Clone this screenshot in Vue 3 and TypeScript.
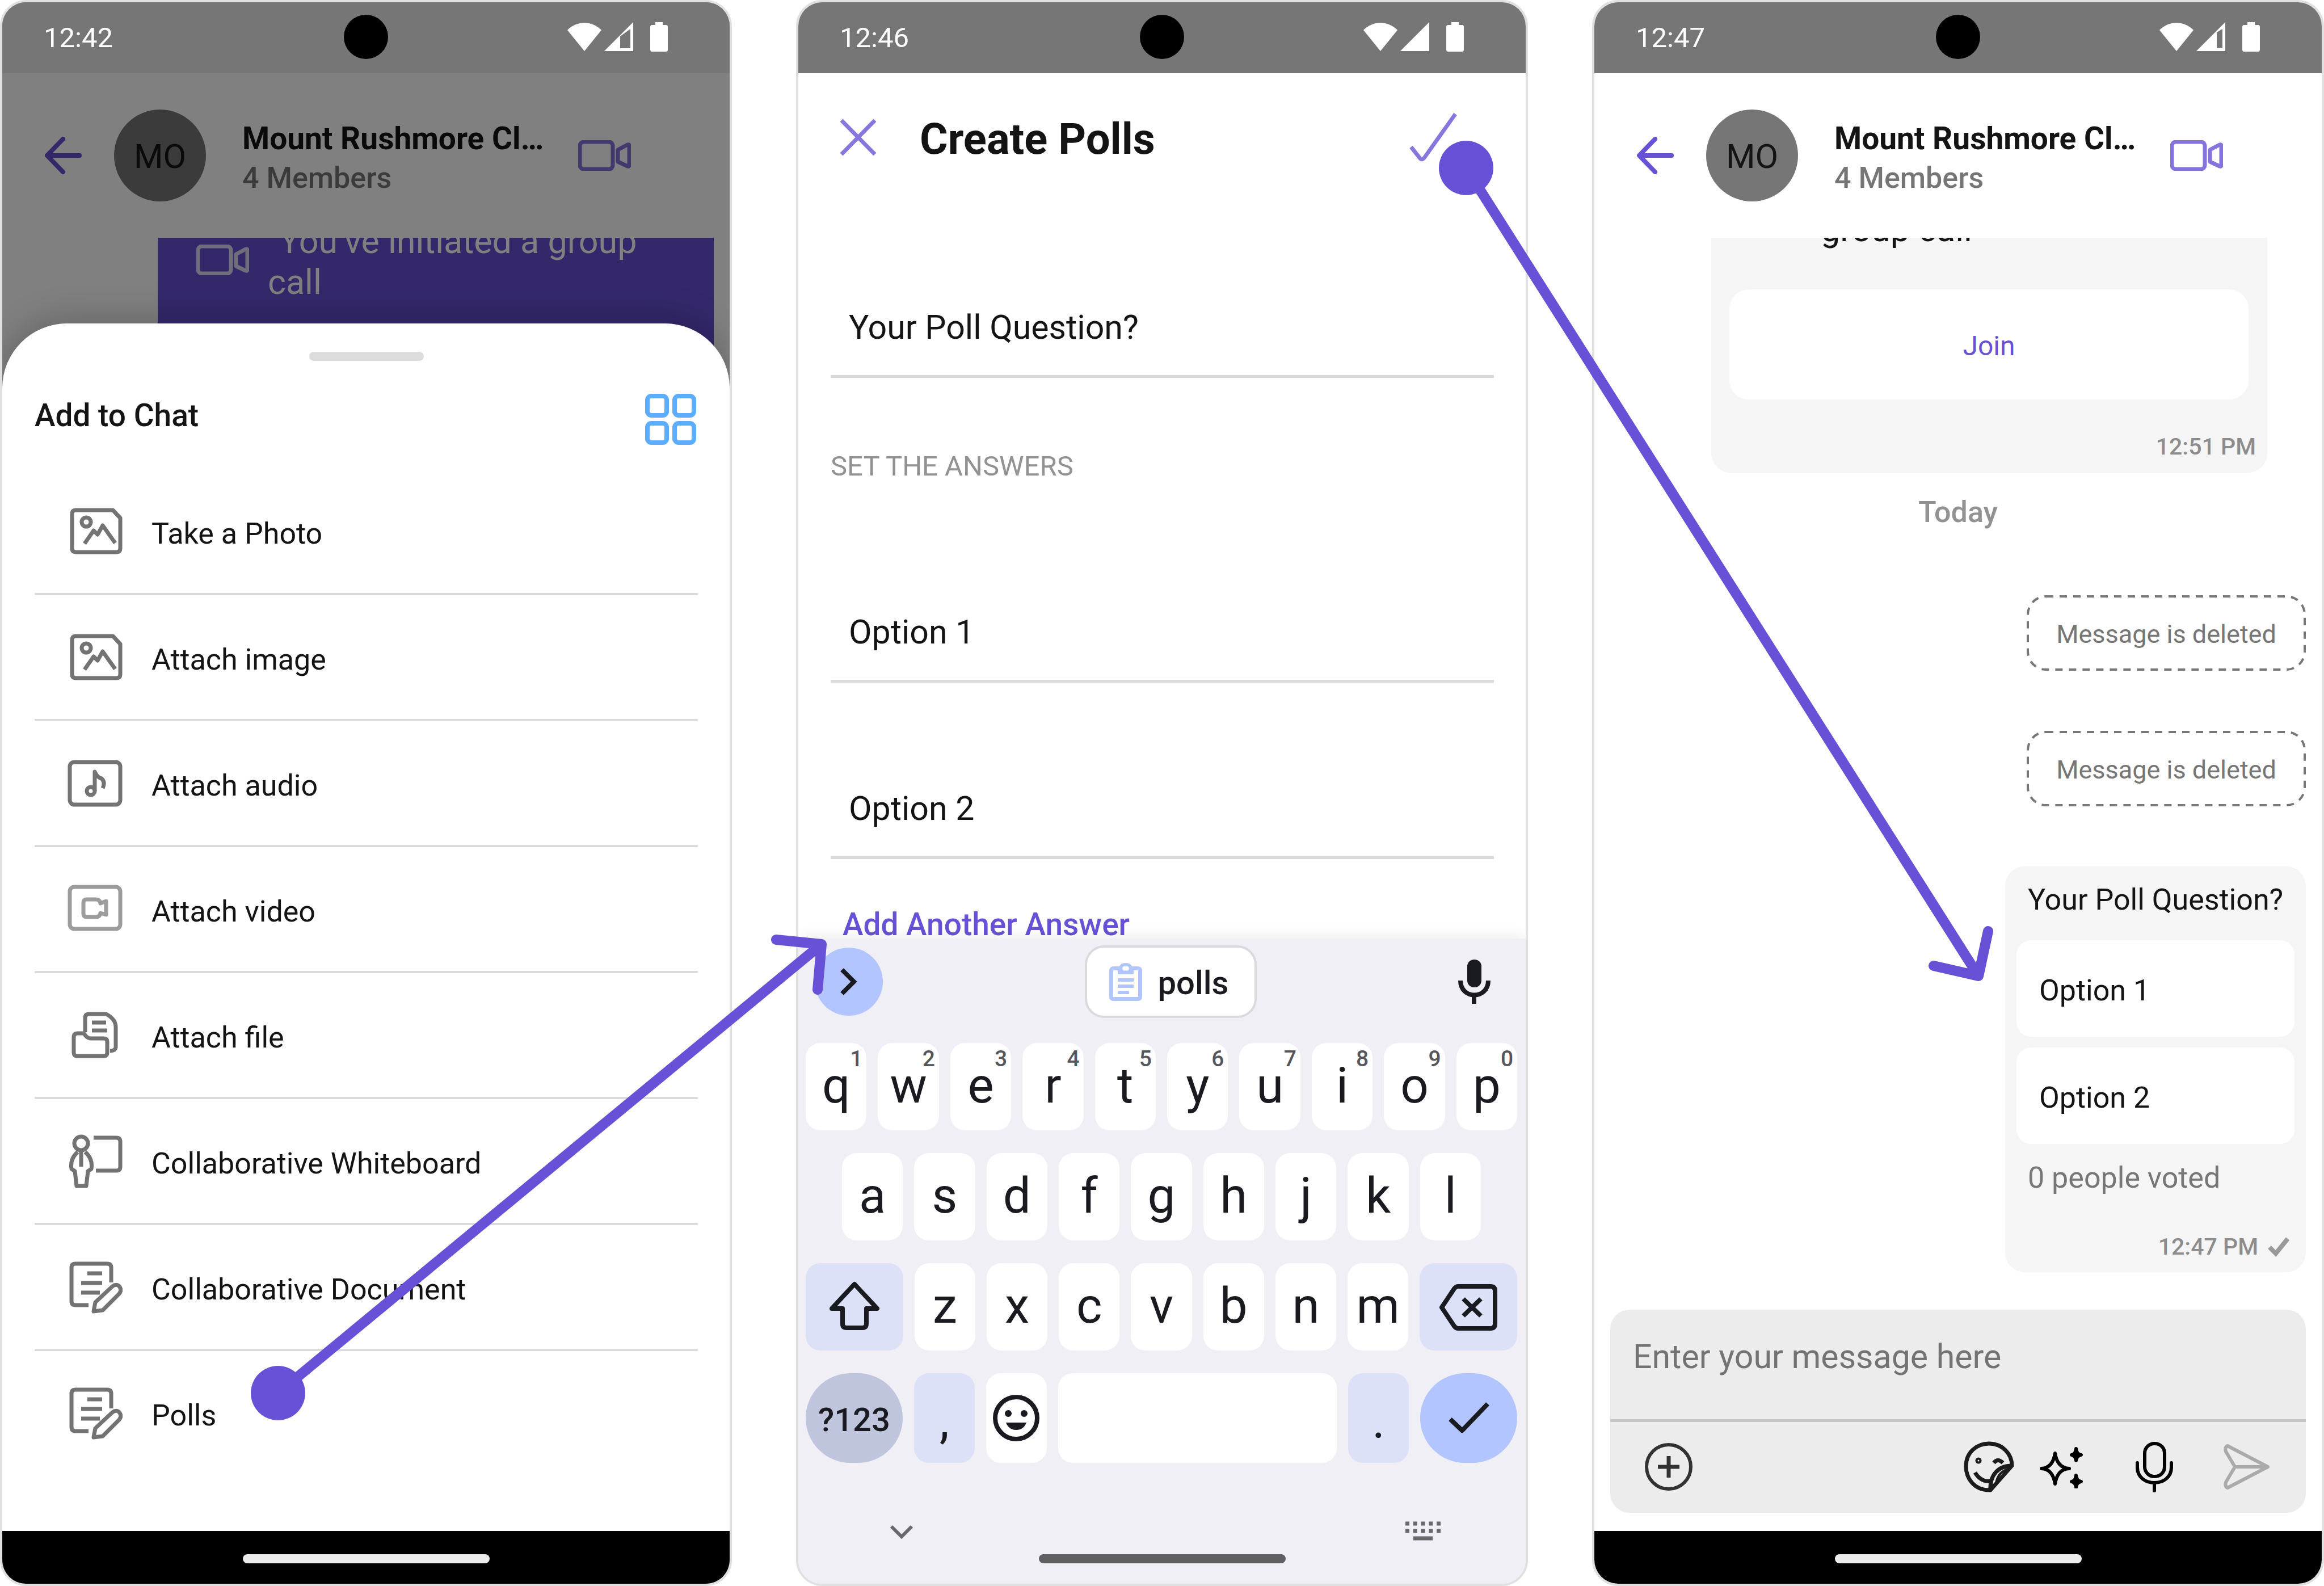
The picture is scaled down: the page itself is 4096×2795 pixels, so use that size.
<script setup lang="ts">
import { ref } from 'vue'

interface Attachment {
  label: string
  icon: 'image' | 'audio' | 'video' | 'file' | 'board' | 'doc'
}

const attachments: Attachment[] = [
  { label: 'Take a Photo', icon: 'image' },
  { label: 'Attach image', icon: 'image' },
  { label: 'Attach audio', icon: 'audio' },
  { label: 'Attach video', icon: 'video' },
  { label: 'Attach file', icon: 'file' },
  { label: 'Collaborative Whiteboard', icon: 'board' },
  { label: 'Collaborative Document', icon: 'doc' },
  { label: 'Polls', icon: 'doc' },
]

const question = ref('Your Poll Question?')
const options = ref(['Option 1', 'Option 2'])
const message = ref('')

const topRow = 'qwertyuiop'.split('').map((letter, i) => ({ letter, digit: (i + 1) % 10 }))
const middleRow = 'asdfghjkl'.split('')
const bottomRow = 'zxcvbnm'.split('')
</script>

<template>
  <main class="flow">
    <!-- Attachment sheet -->
    <section class="phone dimmed" aria-label="Add to chat">
      <div class="status">
        <span class="time">12:42</span>
        <span class="camera"></span>
        <span class="indicators">
          <svg width="60" height="50" viewBox="0 0 60 50"><path d="M30 50 0 13C17-4 43-4 60 13Z" fill="#fff" /></svg>
          <svg class="signal" width="51" height="51" viewBox="0 0 51 51"><path d="M0 51 51 0V51ZM28 25V46H46V12Z" fill="#fff" fill-rule="evenodd" /></svg>
          <svg width="31" height="52" viewBox="0 0 31 52"><path d="M3 5H9V0H22V5H28Q31 5 31 9V48Q31 52 28 52H3Q0 52 0 48V9Q0 5 3 5Z" fill="#fff" /></svg>
        </span>
      </div>
      <header class="chat-head">
        <button class="plain back" aria-label="Back">
          <svg width="65" height="66" viewBox="0 0 65 66"><path d="M32 4 4 33 32 62M5 33H61" /></svg>
        </button>
        <span class="avatar">MO</span>
        <div class="who">
          <strong>Mount Rushmore Cl…</strong>
          <span>4 Members</span>
        </div>
        <button class="plain video" aria-label="Start video call">
          <svg width="93" height="54" viewBox="0 0 93 54"><rect x="3" y="3" width="58" height="48" rx="7" /><path d="M70 17 87 8Q90 7 90 10V44Q90 47 87 46L70 38Z" /></svg>
        </button>
      </header>
      <div class="history">
        <div class="call-sent">
          <svg class="call-icon" width="93" height="54" viewBox="0 0 93 54"><rect x="3" y="3" width="58" height="48" rx="7" /><path d="M70 17 87 8Q90 7 90 10V44Q90 47 87 46L70 38Z" /></svg>
          <p>You’ve initiated a group call</p>
        </div>
      </div>
      <div class="sheet">
        <span class="handle"></span>
        <div class="sheet-head">
          <h2>Add to Chat</h2>
          <button class="plain" aria-label="Grid view">
            <svg width="90" height="90" viewBox="0 0 90 90" fill="none" stroke="#5cacff" stroke-width="8"><rect x="4" y="4" width="34" height="34" rx="7" /><rect x="52" y="4" width="34" height="34" rx="7" /><rect x="4" y="52" width="34" height="34" rx="7" /><rect x="52" y="52" width="34" height="34" rx="7" /></svg>
          </button>
        </div>
        <ul class="attachments">
          <li v-for="item in attachments" :key="item.label">
            <button class="plain attach">
              <svg class="attach-icon" :class="item.icon" width="97" height="96" viewBox="0 0 97 96">
                <template v-if="item.icon === 'image'">
                  <path d="M14 11H80L93 25V78Q93 85 86 85H15Q8 85 8 78V18Q8 11 14 11Z" />
                  <circle cx="33" cy="32" r="8" />
                  <path d="M30 70 46 47 53 54 62 38 84 69" />
                </template>
                <template v-else-if="item.icon === 'audio'">
                  <rect x="4" y="11" width="89" height="75" rx="8" />
                  <circle cx="41" cy="62" r="7" />
                  <path d="M48 62V28Q52 38 60 40 67 46 62 57" />
                </template>
                <template v-else-if="item.icon === 'video'">
                  <rect x="4" y="9" width="89" height="74" rx="8" />
                  <path d="M34 31H50Q57 31 58 38L68 34V58L58 55Q57 62 50 62H34Q28 62 28 56V37Q28 31 34 31Z" />
                </template>
                <template v-else-if="item.icon === 'file'">
                  <path d="M31 43V18Q31 11 38 11H68Q85 20 85 34V70Q84 76 75 76M43 26H68M43 40H70" />
                  <path d="M18 45H29Q33 53 40 54H64Q70 54 70 60V79Q70 85 64 85H17Q11 85 11 79V52Q11 45 18 45Z" />
                </template>
                <template v-else-if="item.icon === 'board'">
                  <circle cx="24" cy="17" r="12" />
                  <path d="M24 30V58M18 32Q4 44 7 62L13 66 16 92H33L36 66 42 62Q45 44 31 32M46 7H86Q93 7 93 14V58Q93 65 86 65H50" />
                </template>
                <template v-else>
                  <path d="M37 80H14Q7 80 7 73V14Q7 7 14 7H70Q77 7 77 14V40M35 24H61M24 41H61M24 58H57" />
                  <path d="M46 91 49 75 79 47Q87 41 92 48 96 54 91 60L62 89Z" />
                </template>
              </svg>
              <span>{{ item.label }}</span>
            </button>
          </li>
        </ul>
      </div>
      <div class="nav"><span></span></div>
    </section>

    <!-- Poll editor -->
    <section class="phone" aria-label="Create polls">
      <div class="status">
        <span class="time">12:46</span>
        <span class="camera"></span>
        <span class="indicators">
          <svg width="60" height="50" viewBox="0 0 60 50"><path d="M30 50 0 13C17-4 43-4 60 13Z" fill="#fff" /></svg>
          <svg class="signal" width="51" height="51" viewBox="0 0 51 51"><path d="M0 51 51 0V51Z" fill="#fff" /></svg>
          <svg width="31" height="52" viewBox="0 0 31 52"><path d="M3 5H9V0H22V5H28Q31 5 31 9V48Q31 52 28 52H3Q0 52 0 48V9Q0 5 3 5Z" fill="#fff" /></svg>
        </span>
      </div>
      <form class="poll-form" @submit.prevent>
        <header class="form-head">
          <button type="button" class="plain" aria-label="Close">
            <svg width="65" height="66" viewBox="0 0 65 66"><path d="M3 3 62 63M62 3 3 63" /></svg>
          </button>
          <h1>Create Polls</h1>
          <button type="submit" class="plain" aria-label="Create">
            <svg width="84" height="88" viewBox="0 0 84 88"><path d="M3 61 18 80Q22 86 27 79L81 3" /></svg>
          </button>
        </header>
        <input v-model="question" class="field" aria-label="Question" />
        <h3>SET THE ANSWERS</h3>
        <input v-for="(_, i) in options" :key="i" v-model="options[i]" class="field answer" :aria-label="`Answer ${i + 1}`" />
        <button type="button" class="plain add">Add Another Answer</button>
      </form>
      <div class="keyboard">
        <div class="tools">
          <button class="plain expand" aria-label="More tools">
            <svg width="30" height="48" viewBox="0 0 30 48"><path d="M3 3 24 24 3 45" /></svg>
          </button>
          <button class="plain chip">
            <svg width="58" height="67" viewBox="0 0 58 67"><path d="M8 6H18Q20 0 29 0T40 6H50Q58 6 58 14V59Q58 67 50 67H8Q0 67 0 59V14Q0 6 8 6ZM15 13H7V60H51V13H43V20H15ZM15 27V33H43V27ZM15 38V44H43V38ZM15 49V55H35V49ZM29 6A4 4 0 1 0 29 13 4 4 0 1 0 29 6Z" fill="#b2c5ff" fill-rule="evenodd" /></svg>
            <span>polls</span>
          </button>
          <button class="plain" aria-label="Dictate">
            <svg width="57" height="78" viewBox="0 0 57 78"><rect x="16" y="0" width="25" height="49" rx="12" fill="#1a1b20" /><path d="M4 37C4 71 53 71 53 37M28 62V78" fill="none" stroke="#1a1b20" stroke-width="8" /></svg>
          </button>
        </div>
        <div class="keys">
          <div class="row">
            <button v-for="k in topRow" :key="k.letter" class="key">{{ k.letter }}<sup>{{ k.digit }}</sup></button>
          </div>
          <div class="row inset">
            <button v-for="k in middleRow" :key="k" class="key">{{ k }}</button>
          </div>
          <div class="row">
            <button class="key wide soft" aria-label="Shift">
              <svg width="92" height="88" viewBox="0 0 92 88"><path d="M46 6 86 49H67V76Q67 83 60 83H32Q25 83 25 76V49H6Z" /></svg>
            </button>
            <button v-for="k in bottomRow" :key="k" class="key">{{ k }}</button>
            <button class="key wide soft erase" aria-label="Backspace">
              <svg width="102" height="82" viewBox="0 0 102 82"><path d="M33 4H90Q98 4 98 12V70Q98 78 90 78H33Q29 78 26 74L4 41 26 8Q29 4 33 4ZM42 26 73 56M73 26 42 56" /></svg>
            </button>
          </div>
          <div class="row last">
            <button class="key wide symbols">?123</button>
            <button class="key soft">,</button>
            <button class="key" aria-label="Emoji">
              <svg width="82" height="82" viewBox="0 0 82 82"><circle cx="41" cy="41" r="37" /><circle class="dot" cx="27" cy="33" r="6" /><circle class="dot" cx="55" cy="33" r="6" /><path class="dot" d="M23 49H59Q54 62 41 62T23 49Z" /></svg>
            </button>
            <button class="key space" aria-label="Space"></button>
            <button class="key soft">.</button>
            <button class="key wide enter" aria-label="Done">
              <svg width="72" height="56" viewBox="0 0 72 56"><path d="M3 30 24 50 69 3" /></svg>
            </button>
          </div>
        </div>
        <div class="kb-foot">
          <button class="plain" aria-label="Hide keyboard">
            <svg width="42" height="38" viewBox="0 0 42 38"><path d="M3 11 21 29 39 11" fill="none" stroke="#68686b" stroke-width="6" /></svg>
          </button>
          <button class="plain" aria-label="Switch keyboard">
            <svg width="62" height="38" viewBox="0 0 62 38"><path d="M0 6H62M0 19H62" stroke="#68686b" stroke-width="7" stroke-dasharray="7 6.75" /><path d="M14 32H48" stroke="#68686b" stroke-width="7" /></svg>
          </button>
        </div>
        <span class="home"></span>
      </div>
    </section>

    <!-- Conversation with the poll -->
    <section class="phone" aria-label="Conversation">
      <div class="status">
        <span class="time">12:47</span>
        <span class="camera"></span>
        <span class="indicators">
          <svg width="60" height="50" viewBox="0 0 60 50"><path d="M30 50 0 13C17-4 43-4 60 13Z" fill="#fff" /></svg>
          <svg class="signal" width="51" height="51" viewBox="0 0 51 51"><path d="M0 51 51 0V51ZM36 18V46H46V12Z" fill="#fff" fill-rule="evenodd" /></svg>
          <svg width="31" height="52" viewBox="0 0 31 52"><path d="M3 5H9V0H22V5H28Q31 5 31 9V48Q31 52 28 52H3Q0 52 0 48V9Q0 5 3 5Z" fill="#fff" /></svg>
        </span>
      </div>
      <header class="chat-head">
        <button class="plain back" aria-label="Back">
          <svg width="65" height="66" viewBox="0 0 65 66"><path d="M32 4 4 33 32 62M5 33H61" /></svg>
        </button>
        <span class="avatar">MO</span>
        <div class="who">
          <strong>Mount Rushmore Cl…</strong>
          <span>4 Members</span>
        </div>
        <button class="plain video" aria-label="Start video call">
          <svg width="93" height="54" viewBox="0 0 93 54"><rect x="3" y="3" width="58" height="48" rx="7" /><path d="M70 17 87 8Q90 7 90 10V44Q90 47 87 46L70 38Z" /></svg>
        </button>
      </header>
      <div class="messages">
        <div class="call-card">
          <p>group call</p>
          <button class="plain join">Join</button>
          <time>12:51 PM</time>
        </div>
        <p class="day">Today</p>
        <div v-for="n in 2" :key="n" class="deleted">
          <svg aria-hidden="true"><rect x="2" y="2" rx="32" /></svg>
          <span>Message is deleted</span>
        </div>
        <div class="poll">
          <p class="poll-title">{{ question }}</p>
          <button v-for="o in options" :key="o" class="plain option">{{ o }}</button>
          <p class="votes">0 people voted</p>
          <div class="sent">
            <time>12:47 PM</time>
            <svg width="38" height="38" viewBox="0 0 38 38"><path d="M3 20 14 31 35 5" fill="none" stroke="#999" stroke-width="8" /></svg>
          </div>
        </div>
      </div>
      <div class="composer">
        <input v-model="message" placeholder="Enter your message here" aria-label="Message" />
        <div class="actions">
          <button class="plain" aria-label="Attach">
            <svg width="87" height="87" viewBox="0 0 87 87" fill="none" stroke="#333" stroke-width="6"><circle cx="43" cy="43" r="39" /><path d="M43 24V62M24 43H62" stroke-width="7" /></svg>
          </button>
          <span class="pair">
            <button class="plain" aria-label="Stickers">
              <svg width="89" height="90" viewBox="0 0 89 90" fill="none" stroke="#1c1c1c" stroke-width="7"><path d="M45 86C19 86 4 66 4 44 4 20 22 4 45 4S85 22 85 43L47 86ZM47 86C46 60 60 43 85 43M20 55Q30 72 47 70" /><path d="M53 38Q60 29 69 38" /><path d="M57 74Q60 54 80 48" stroke-width="4" /><circle cx="26" cy="34" r="2" /></svg>
            </button>
            <button class="plain" aria-label="Smart replies">
              <svg width="76" height="76" viewBox="0 0 76 76"><path d="M27 14Q31 40 52 41 31 42 27 68 23 42 3 41 23 40 27 14Z" fill="none" stroke="#000" stroke-width="6" stroke-linejoin="round" /><path d="M64 6Q65 16 73 17 65 18 64 27 63 18 56 17 63 16 64 6ZM64 53Q65 63 73 64 65 65 64 74 63 65 56 64 63 63 64 53Z" stroke="#000" stroke-width="6" stroke-linejoin="round" /></svg>
            </button>
          </span>
          <button class="plain" aria-label="Record voice">
            <svg width="68" height="90" viewBox="0 0 68 90" fill="none" stroke="#000" stroke-width="6" stroke-linecap="round"><rect x="17" y="4" width="35" height="58" rx="17" /><path d="M4 38V46C4 82 64 82 64 46V38M34 75V87" /></svg>
          </button>
          <button class="plain" aria-label="Send">
            <svg width="82" height="82" viewBox="0 0 82 82" fill="none" stroke="#aaa" stroke-width="6" stroke-linejoin="round"><path d="M7 4 78 41 7 78Q2 76 4 68L20 41 4 14Q2 6 7 4ZM20 41H76" /></svg>
          </button>
        </div>
      </div>
      <div class="nav"><span></span></div>
    </section>

    <svg class="arrows" viewBox="0 0 4096 2795" aria-hidden="true">
      <circle cx="490" cy="2455" r="48" />
      <path d="M490 2455 1448 1664M1368 1656 1448 1664 1441 1744" />
      <circle cx="2584" cy="296" r="48" />
      <path d="M2584 296 3487 1720M3408 1702 3487 1720 3504 1641" />
    </svg>
  </main>
</template>

<style>
body {
  margin: 0;
  background: #fff;
}
</style>

<style scoped>
* {
  box-sizing: border-box;
}
h1,
h2,
h3,
p,
ul {
  margin: 0;
  padding: 0;
  font-weight: 400;
}
svg {
  display: block;
  flex: none;
}
button,
input {
  font: inherit;
  color: inherit;
}
.plain {
  display: block;
  padding: 0;
  border: 0;
  background: none;
  text-align: left;
}
.flow {
  position: relative;
  display: flex;
  gap: 113px;
  min-height: 100vh;
  font-family: Roboto, 'Liberation Sans', sans-serif;
  color: #141414;
}
.phone {
  flex: 1 1 0;
  min-width: 0;
  display: flex;
  flex-direction: column;
  overflow: hidden;
  border: 4px solid #e0e0e0;
  border-radius: 46px;
  background: #fff;
}
.status {
  display: grid;
  grid-template-columns: 1fr auto 1fr;
  align-items: center;
  height: 125px;
  padding-bottom: 4px;
  background: #767676;
  color: #fff;
}
.time {
  padding: 4px 0 0 73px;
  font-size: 49px;
  line-height: 60px;
}
.camera {
  width: 78px;
  height: 78px;
  border-radius: 50%;
  background: #000;
}
.indicators {
  display: flex;
  justify-content: flex-end;
  align-items: center;
  gap: 5px;
  padding-right: 109px;
}
.signal {
  margin-right: 25px;
}
.chat-head {
  display: flex;
  align-items: center;
  height: 290px;
  padding: 0 174px 0 75px;
}
.back svg,
.video svg,
.call-icon {
  fill: none;
  stroke: #6851d6;
  stroke-width: 8;
  stroke-linecap: round;
  stroke-linejoin: round;
}
.video svg,
.call-icon {
  stroke-width: 7;
  opacity: 0.8;
}
.avatar {
  flex: none;
  width: 162px;
  height: 162px;
  margin: 0 64px 0 57px;
  border-radius: 50%;
  background: #767676;
  font-size: 59px;
  line-height: 166px;
  text-align: center;
}
.who {
  flex: 1;
  min-width: 0;
  padding-top: 6px;
}
.who strong,
.who span {
  display: block;
  white-space: nowrap;
}
.who strong {
  font-size: 55px;
  font-weight: 700;
  line-height: 74px;
}
.who span {
  font-size: 52px;
  font-weight: 500;
  line-height: 66px;
  color: #767676;
}
.dimmed {
  background: #808080;
  color: #0a0a0a;
}
.dimmed .avatar {
  background: #3b3b3b;
}
.dimmed .who span {
  color: #3b3b3b;
}
.dimmed .back svg,
.dimmed .video svg {
  stroke: #34286b;
}
.history {
  height: 240px;
  padding: 0 28px 0 274px;
  overflow: hidden;
}
.call-sent {
  display: flex;
  align-items: flex-start;
  gap: 33px;
  height: 100%;
  padding: 0 80px 0 68px;
  background: #34286b;
  color: #808080;
}
.dimmed .call-icon {
  margin-top: 12px;
  stroke: #808080;
}
.call-sent p {
  margin-top: -30px;
  text-indent: 20px;
  font-size: 61px;
  line-height: 72px;
}
.sheet {
  position: relative;
  flex: 1;
  margin-top: -89px;
  padding: 50px 56px 0 57px;
  border-radius: 114px 114px 0 0;
  background: #fff;
  color: #141414;
  box-shadow: 0 -10px 60px rgba(0, 0, 0, 0.2);
}
.handle {
  display: block;
  width: 202px;
  height: 16px;
  margin: 0 auto;
  border-radius: 8px;
  background: #dcdcdc;
}
.sheet-head {
  display: flex;
  align-items: flex-start;
  justify-content: space-between;
  height: 191px;
  padding: 58px 3px 0 0;
}
.sheet-head h2 {
  font-size: 55px;
  font-weight: 500;
  line-height: 76px;
}
.attachments {
  list-style: none;
}
.attach {
  display: flex;
  align-items: center;
  gap: 51px;
  width: 100%;
  height: 222px;
  padding-left: 58px;
  border-bottom: 4px solid #dcdcdc;
}
li:last-child .attach {
  border-color: transparent;
}
.attach span {
  padding-top: 9px;
  font-size: 52px;
  line-height: 60px;
}
.attach-icon {
  fill: none;
  stroke: #737373;
  stroke-width: 7;
  stroke-linejoin: round;
}
.attach-icon.video {
  stroke: #9c9c9c;
}
.nav {
  display: flex;
  align-items: center;
  justify-content: center;
  height: 93px;
  padding-top: 4px;
  background: #000;
}
.nav span,
.home {
  width: 435px;
  height: 16px;
  border-radius: 8px;
  background: #ececec;
}
.poll-form {
  flex: 1;
  padding: 0 56px 0 57px;
}
.form-head {
  display: flex;
  align-items: center;
  height: 226px;
  padding: 0 65px 0 16px;
}
.form-head svg {
  fill: none;
  stroke: #8876df;
  stroke-width: 7;
}
.form-head h1 {
  flex: 1;
  padding: 6px 0 0 76px;
  font-size: 76px;
  font-weight: 700;
  line-height: 88px;
}
.field {
  display: block;
  width: 100%;
  height: 172px;
  margin-top: 139px;
  padding: 0 32px 2px;
  border: 0;
  border-bottom: 5px solid #dcdcdc;
  outline: 0;
  background: none;
  font-size: 59px;
}
.poll-form h3 {
  margin: 126px 0 179px;
  font-size: 49px;
  line-height: 60px;
  color: #929292;
}
.poll-form h3 + .field {
  margin-top: 0;
}
.add {
  margin: 90px 0 0 21px;
  font-size: 55px;
  font-weight: 500;
  line-height: 50px;
  color: #6851d6;
}
.keyboard {
  display: flex;
  flex-direction: column;
  background: #f0eff6;
  box-shadow: 0 -4px 24px rgba(0, 0, 0, 0.08);
  color: #1a1b20;
}
.tools {
  display: flex;
  align-items: center;
  justify-content: space-between;
  height: 184px;
  padding: 0 62px 32px 29px;
}
.expand {
  display: flex;
  align-items: center;
  justify-content: center;
  width: 120px;
  height: 120px;
  border-radius: 50%;
  background: #b2c5ff;
}
.expand path {
  fill: none;
  stroke: #1a1b20;
  stroke-width: 8;
}
.chip {
  display: flex;
  align-items: center;
  gap: 28px;
  width: 303px;
  height: 128px;
  padding-left: 39px;
  border: 4px solid #d9d9de;
  border-radius: 34px;
  background: #fff;
  font-size: 58px;
  font-weight: 500;
}
.chip span {
  padding-top: 3px;
}
.keys {
  display: flex;
  flex-direction: column;
  gap: 40px;
}
.row {
  display: flex;
  gap: 20px;
  height: 154px;
  padding: 0 15px 0 13px;
}
.row.inset {
  padding: 0 79px 0 77px;
}
.row.last {
  height: 158px;
}
.key {
  position: relative;
  flex: 10 1 0;
  display: flex;
  align-items: center;
  justify-content: center;
  min-width: 0;
  padding: 0 0 4px;
  border: 0;
  border-radius: 26px;
  background: #fff;
  font-size: 87px;
  line-height: 100px;
}
.key.erase {
  padding: 2px 0 0;
}
.last .key {
  padding: 8px 0 0;
}
.last .key svg {
  margin-top: -8px;
}
.key sup {
  position: absolute;
  top: 8px;
  right: 7px;
  font-size: 39px;
  font-weight: 500;
  line-height: 40px;
  color: #55555a;
}
.key svg {
  fill: none;
  stroke: #1a1b20;
  stroke-width: 8;
  stroke-linejoin: round;
}
.key svg .dot {
  fill: #1a1b20;
  stroke: none;
}
.key.soft {
  background: #dde1f8;
}
.key.wide {
  flex-grow: 16;
}
.key.space {
  flex-grow: 46;
}
.last .symbols {
  padding-top: 5px;
  border-radius: 79px;
  background: #c0c5de;
  font-size: 58px;
  font-weight: 500;
}
.key.enter {
  border-radius: 79px;
  background: #b2c5ff;
}
.kb-foot {
  display: flex;
  justify-content: space-between;
  padding: 101px 150px 22px 161px;
}
.home {
  margin: 0 auto 36px;
  background: #606063;
}
.messages {
  flex: 1;
  display: flex;
  flex-direction: column;
  overflow: hidden;
}
.call-card {
  margin: 0 96px 0 206px;
  padding: 0 33px 16px 32px;
  border-radius: 0 0 34px 34px;
  background: #f5f5f5;
}
.call-card p {
  margin-top: -51px;
  padding-left: 161px;
  font-size: 61px;
  line-height: 72px;
}
.join {
  width: 100%;
  height: 194px;
  margin: 70px 0 53px;
  padding-top: 4px;
  border-radius: 34px;
  background: #fff;
  font-size: 48px;
  text-align: center;
  color: #6851d6;
}
time {
  display: block;
  font-size: 41px;
  font-weight: 500;
  line-height: 60px;
  color: #8c8c8c;
}
.call-card time {
  margin-right: -13px;
  text-align: right;
}
.day {
  margin: 40px 0 10px;
  font-size: 52px;
  font-weight: 500;
  line-height: 60px;
  text-align: center;
  color: #929292;
}
.deleted,
.poll {
  align-self: flex-end;
  margin: 106px 28px 0 0;
}
.deleted {
  position: relative;
  width: 492px;
  height: 133px;
  font-size: 45px;
  line-height: 137px;
  text-align: center;
  color: #767676;
}
.deleted svg {
  position: absolute;
  inset: 0;
  width: 100%;
  height: 100%;
}
.deleted rect {
  width: calc(100% - 4px);
  height: calc(100% - 4px);
  fill: none;
  stroke: #767676;
  stroke-width: 4;
  stroke-dasharray: 13 11;
}
.poll {
  width: 530px;
  padding: 29px 20px 15px;
  border-radius: 34px;
  background: #f5f5f5;
  font-size: 52px;
  line-height: 60px;
}
.poll-title {
  padding-left: 20px;
  margin-bottom: 41px;
  white-space: nowrap;
}
.option {
  width: 100%;
  height: 170px;
  margin-bottom: 19px;
  padding: 8px 0 0 40px;
  border-radius: 26px;
  background: #fff;
}
.votes {
  padding: 11px 0 61px 20px;
  color: #767676;
}
.sent {
  display: flex;
  align-items: center;
  justify-content: flex-end;
  gap: 17px;
  padding-right: 9px;
}
.composer {
  margin: 0 28px 32px;
  border-radius: 34px;
  background: #ececec;
}
.composer input {
  display: block;
  width: 100%;
  height: 198px;
  padding: 0 40px 29px;
  border: 0;
  border-bottom: 5px solid #c8c8c8;
  outline: 0;
  background: none;
  font-size: 59px;
}
.composer input::placeholder {
  color: #737373;
  opacity: 1;
}
.actions {
  display: flex;
  align-items: center;
  gap: 88px;
  height: 160px;
  padding: 0 63px 2px 60px;
}
.pair {
  display: flex;
  align-items: center;
  gap: 45px;
  margin: 0 4px 0 auto;
}
.arrows {
  position: absolute;
  top: 0;
  left: 0;
  width: 100%;
  pointer-events: none;
  fill: #6851d6;
}
.arrows path {
  fill: none;
  stroke: #6851d6;
  stroke-width: 18;
  stroke-linecap: round;
  stroke-linejoin: round;
}
</style>
